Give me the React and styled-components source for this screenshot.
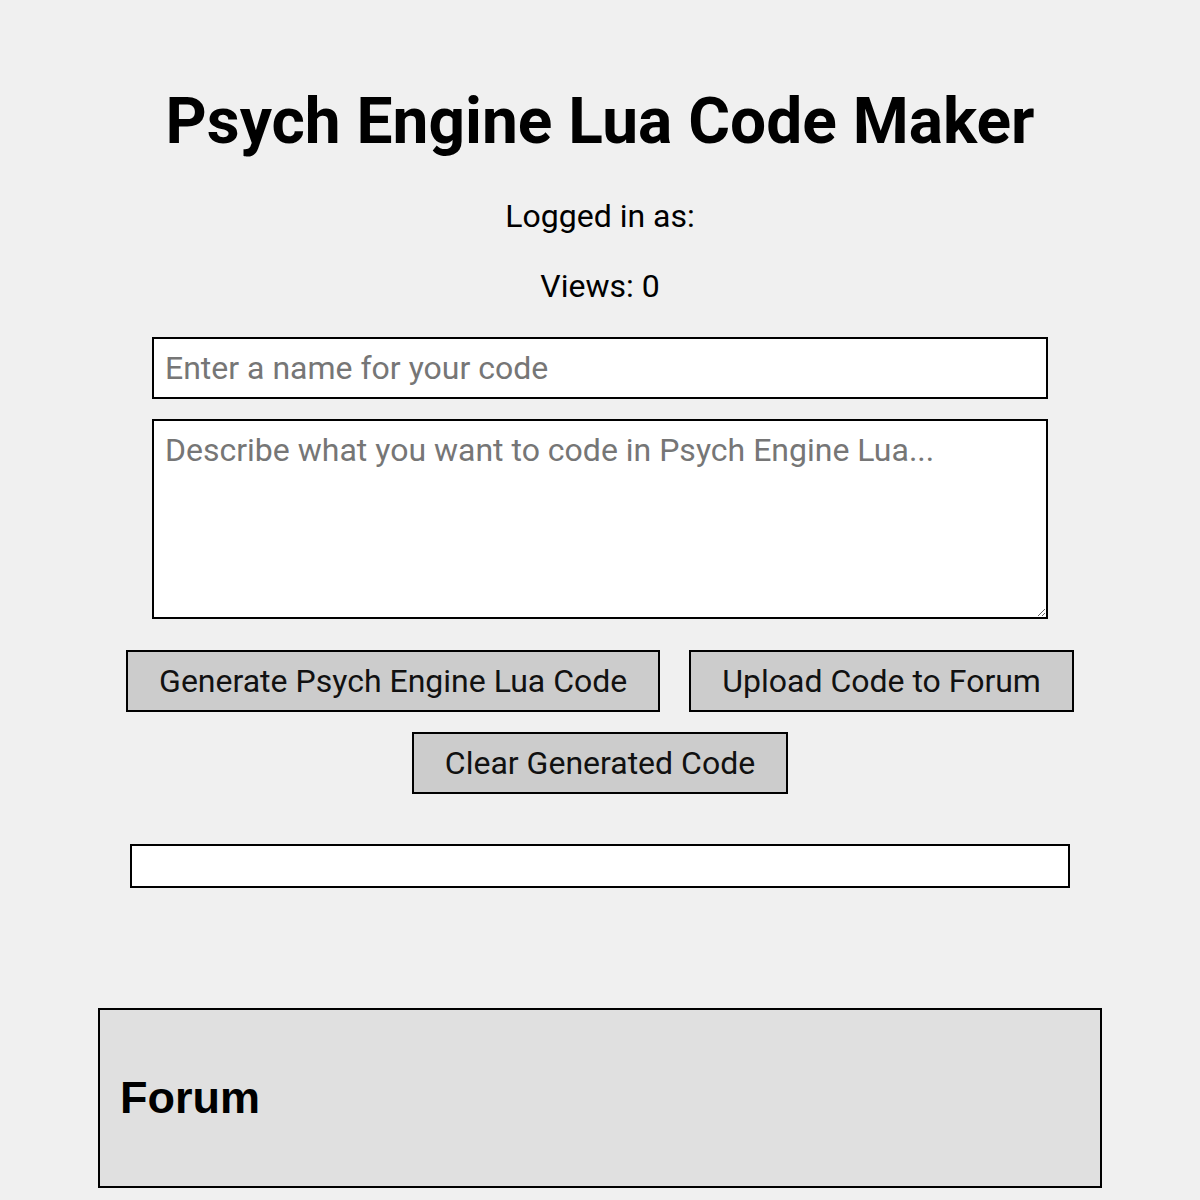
import React from "react";
import styled, { createGlobalStyle } from "styled-components";

const GlobalStyle = createGlobalStyle`
  body {
    margin: 0;
    background: #f0f0f0;
    font-family: Roboto, "Liberation Sans", sans-serif;
    color: #000;
  }
`;

const Page = styled.div`
  display: flex;
  flex-direction: column;
  align-items: center;
  padding-top: 84px;
  padding-bottom: 40px;
`;

const Title = styled.h1`
  font-size: 64px;
  font-weight: 700;
  margin: 0 0 39px;
  line-height: 75px;
`;

const Info = styled.p`
  font-size: 32px;
  margin: 0 0 32px;
  line-height: 37.5px;
`;

const NameInput = styled.input`
  box-sizing: border-box;
  width: 896px;
  height: 62px;
  padding: 0 11px;
  border: 2px solid #000;
  background: #fff;
  font-family: Roboto, sans-serif;
  font-size: 32px;
  outline: none;

  &::placeholder {
    color: #767676;
  }
`;

const Prompt = styled.textarea`
  box-sizing: border-box;
  width: 896px;
  height: 200px;
  margin-top: 20px;
  padding: 11px 11px;
  border: 2px solid #000;
  background: #fff;
  font-family: Roboto, sans-serif;
  font-size: 32px;
  line-height: 37.5px;
  outline: none;
  resize: vertical;

  &::placeholder {
    color: #767676;
  }
`;

const Actions = styled.div`
  display: flex;
  flex-wrap: wrap;
  justify-content: center;
  column-gap: 29px;
  row-gap: 20px;
  width: 960px;
  margin-top: 31px;
`;

const Button = styled.button`
  box-sizing: border-box;
  height: 62px;
  padding: 0 31px;
  background: #ccc;
  border: 2px solid #000;
  border-radius: 0;
  font-family: Roboto, sans-serif;
  font-size: 32px;
  color: #111;
  cursor: pointer;
`;

const Output = styled.pre`
  box-sizing: border-box;
  width: 940px;
  height: 44px;
  margin: 50px 0 0;
  padding: 20px;
  background: #fff;
  border: 2px solid #000;
`;

const Forum = styled.section`
  box-sizing: border-box;
  width: 1004px;
  margin-top: 120px;
  padding: 20px;
  background: #e0e0e0;
  border: 2px solid #000;
`;

const ForumTitle = styled.h2`
  font-family: "Liberation Sans", Arial, sans-serif;
  font-size: 45px;
  line-height: 52px;
  font-weight: 700;
  margin: 42px 0;
`;

export default function App() {
  return (
    <>
      <GlobalStyle />
      <Page>
        <Title>Psych Engine Lua Code Maker</Title>
        <Info>Logged in as:</Info>
        <Info>Views: 0</Info>
        <NameInput placeholder="Enter a name for your code" />
        <Prompt placeholder="Describe what you want to code in Psych Engine Lua..." />
        <Actions>
          <Button>Generate Psych Engine Lua Code</Button>
          <Button>Upload Code to Forum</Button>
          <Button>Clear Generated Code</Button>
        </Actions>
        <Output />
        <Forum>
          <ForumTitle>Forum</ForumTitle>
        </Forum>
      </Page>
    </>
  );
}
